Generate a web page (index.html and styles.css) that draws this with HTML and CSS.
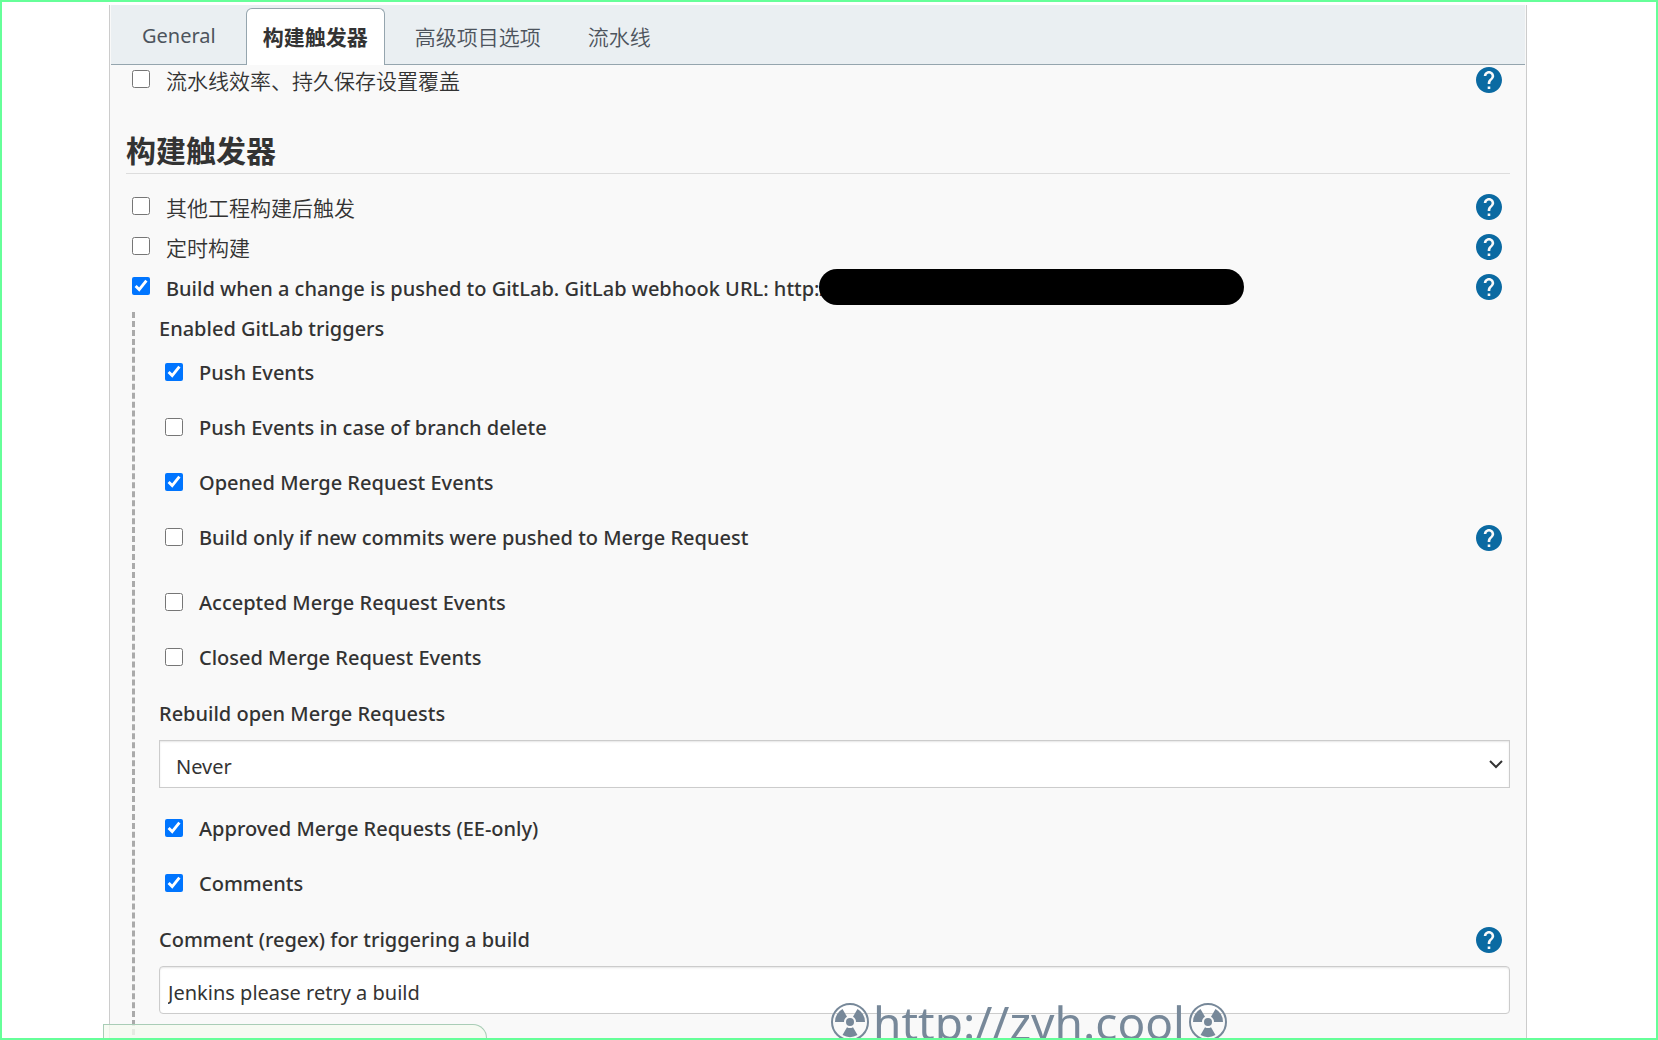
FILE: index.html
```
<!DOCTYPE html>
<html lang="zh-CN">
<head>
<meta charset="utf-8">
<title>构建触发器</title>
<link rel="stylesheet" href="styles.css">
</head>
<body>
<svg class="defs" aria-hidden="true">
  <symbol id="help" viewBox="2 2 20 20">
    <path d="M12 2C6.48 2 2 6.48 2 12s4.480 10 10 10 10-4.480 10-10S17.520 2 12 2zm1 17h-2v-2h2v2zm2.070-7.750l-.9.920C13.450 12.900 13 13.500 13 15h-2v-.5c0-1.100.45-2.100 1.170-2.830l1.240-1.260c.370-.36.590-.86.590-1.410 0-1.100-.9-2-2-2s-2 .9-2 2H8c0-2.210 1.790-4 4-4s4 1.790 4 4c0 .88-.36 1.680-.93 2.250z"/>
  </symbol>
  <symbol id="trefoil" viewBox="0 0 38 38">
    <circle cx="19" cy="19" r="18" fill="none" stroke="currentColor" stroke-width="2"/>
    <circle cx="19" cy="19" r="4"/>
    <path d="M13 19H4A15 15 0 0 1 11.500 6L16 13.800A6 6 0 0 0 13 19zM25 19h9A15 15 0 0 0 26.500 6L22 13.800A6 6 0 0 1 25 19zM16 24.200L11.500 32A15 15 0 0 0 26.500 32L22 24.200A6 6 0 0 1 16 24.200z"/>
  </symbol>
</svg>
<main class="panel">
  <nav class="tabs">
    <a class="tab" lang="en" href="#general">General</a>
    <a class="tab active" href="#triggers">构建触发器</a>
    <a class="tab" href="#advanced">高级项目选项</a>
    <a class="tab" href="#pipeline">流水线</a>
  </nav>
  <form class="config">
    <div class="row first">
      <input type="checkbox" id="durability"><label for="durability">流水线效率、持久保存设置覆盖</label>
      <button type="button" class="help" aria-label="Help"><svg><use href="#help"/></svg></button>
    </div>
    <h2 id="triggers">构建触发器</h2>
    <div class="row">
      <input type="checkbox" id="upstream"><label for="upstream">其他工程构建后触发</label>
      <button type="button" class="help" aria-label="Help"><svg><use href="#help"/></svg></button>
    </div>
    <div class="row">
      <input type="checkbox" id="timer"><label for="timer">定时构建</label>
      <button type="button" class="help" aria-label="Help"><svg><use href="#help"/></svg></button>
    </div>
    <div class="row">
      <input type="checkbox" id="gitlab" checked><label lang="en" for="gitlab">Build when a change is pushed to GitLab. GitLab webhook URL: http:/</label><span class="redacted"></span>
      <button type="button" class="help" aria-label="Help"><svg><use href="#help"/></svg></button>
    </div>
    <div class="nested" lang="en">
      <div class="caption">Enabled GitLab triggers</div>
      <div class="event"><input type="checkbox" id="push" checked><label for="push">Push Events</label></div>
      <div class="event"><input type="checkbox" id="delete"><label for="delete">Push Events in case of branch delete</label></div>
      <div class="event"><input type="checkbox" id="opened" checked><label for="opened">Opened Merge Request Events</label></div>
      <div class="event with-help"><input type="checkbox" id="commits"><label for="commits">Build only if new commits were pushed to Merge Request</label>
        <button type="button" class="help" aria-label="Help"><svg><use href="#help"/></svg></button></div>
      <div class="event"><input type="checkbox" id="accepted"><label for="accepted">Accepted Merge Request Events</label></div>
      <div class="event"><input type="checkbox" id="closed"><label for="closed">Closed Merge Request Events</label></div>
      <div class="caption"><label for="rebuild">Rebuild open Merge Requests</label></div>
      <div class="select-box">
        <select id="rebuild"><option>Never</option></select>
        <svg class="chevron" viewBox="0 0 14 9"><path d="M1 1l6 6 6-6"/></svg>
      </div>
      <div class="event"><input type="checkbox" id="approved" checked><label for="approved">Approved Merge Requests (EE-only)</label></div>
      <div class="event"><input type="checkbox" id="comments" checked><label for="comments">Comments</label></div>
      <div class="caption"><label for="regex">Comment (regex) for triggering a build</label>
        <button type="button" class="help" aria-label="Help"><svg><use href="#help"/></svg></button></div>
      <input type="text" class="text" id="regex" value="Jenkins please retry a build">
    </div>
  </form>
</main>
<div class="save-bar"></div>
<div class="watermark"><svg><use href="#trefoil"/></svg><span>http://zyh.cool</span><svg><use href="#trefoil"/></svg></div>
<div class="frame"></div>
</body>
</html>
```

FILE: styles.css
```
* { box-sizing: border-box; }
html { height: 100%; }
body {
  margin: 0;
  height: 100%;
  padding: 5px 131px 0 109px;
  display: flex;
  overflow: hidden;
  background: #fff;
  color: #333;
  font: 20px/30px "Noto Sans", "Noto Sans CJK SC", sans-serif;
}
.defs { position: absolute; width: 0; height: 0; }
.panel {
  flex: 1;
  background: #f9f9f9;
  border: solid #ccc;
  border-width: 0 1px;
  padding: 0 1px;
}
.tabs {
  display: flex;
  align-items: flex-end;
  gap: 13px;
  height: 60px;
  padding: 0 14px;
  background: #eaeff2;
  border-bottom: 1px solid #95a5ae;
}
.tab {
  height: 57px;
  margin-bottom: -1px;
  padding: 0 16px;
  border: 1px solid transparent;
  border-bottom: 0;
  border-radius: 6px 6px 0 0;
  font-size: 21px;
  line-height: 54px;
  color: #4d545d;
  text-decoration: none;
}
.tab:lang(en) { font-size: 20px; }
.tab:lang(zh) { font-family: "Noto Sans CJK SC", sans-serif; font-weight: 350; }
.tab.active { background: #fff; border-color: #95a5ae; color: #333; font-weight: 700; }
.config { padding: 0 15px; }
.row, .event { display: flex; align-items: center; gap: 16px; }
.row { height: 40px; padding: 0 8px 0 6px; }
.row.first { height: 30px; }
.row label:lang(en) { padding-top: 3px; }
label, .caption { font-weight: 500; }
label:lang(zh) { font-family: "Noto Sans CJK SC", sans-serif; font-size: 21px; font-weight: 350; }
input[type="checkbox"] { width: 18px; height: 18px; margin: 0 0 2px; accent-color: #0075ff; flex: none; }
.help { margin: 0 0 0 auto; padding: 0; border: 0; background: none; width: 26px; height: 26px; flex: none; }
.help svg { display: block; width: 26px; height: 26px; fill: #0b6aa2; }
h2 {
  margin: 33px 0 13px;
  border-bottom: 1px solid #ddd;
  font-size: 30px;
  line-height: 45px;
}
.redacted { width: 425px; height: 36px; border-radius: 18px; background: #000; margin-left: -24px; }
.nested { margin: 5px 0 0 6px; padding: 0 0 30px 24px; border-left: 3px dashed #aaa; }
.caption { display: flex; align-items: center; height: 33px; padding-right: 8px; }
.event + .caption { margin-top: 12px; }
.event { height: 55px; padding: 0 8px 0 6px; }
.event.with-help { height: 65px; padding-bottom: 10px; }
.select-box { position: relative; margin: 10px 0 13px; }
select, .text {
  display: block;
  width: 100%;
  height: 48px;
  border: 1px solid #ccc;
  background: #fff;
  box-shadow: inset 0 1px 2px #0000001a;
  color: #333;
  font: inherit;
}
select { appearance: none; padding: 6px 16px 0; border-radius: 0; }
.chevron { position: absolute; right: 7px; top: 20px; width: 14px; height: 9px; fill: none; stroke: #333; stroke-width: 2; }
.text { padding: 4px 8px 0; border-radius: 4px; margin-top: 10px; }
.save-bar {
  position: fixed;
  left: 103px;
  bottom: 0;
  width: 384px;
  height: 16px;
  border: 1px solid #a9cdb6;
  border-bottom: 0;
  border-radius: 0 14px 0 0;
  background: #f5faf0cc;
}
.watermark {
  position: fixed;
  left: 831px;
  bottom: -17px;
  display: flex;
  align-items: center;
  gap: 4px;
  height: 70px;
  color: #789;
  font-size: 46px;
  line-height: 70px;
}
.watermark svg { width: 38px; height: 38px; fill: currentColor; }
.frame { position: fixed; inset: 0; border: 2px solid #6f9; pointer-events: none; }
```
